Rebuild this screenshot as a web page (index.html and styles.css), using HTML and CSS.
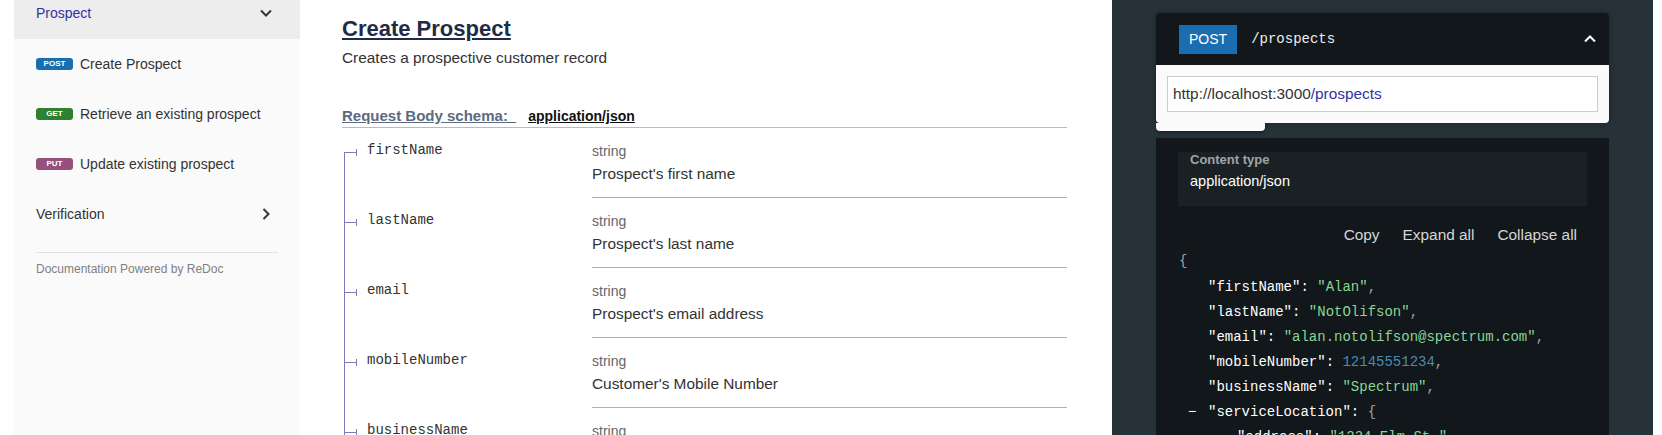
FILE: index.html
```html
<!DOCTYPE html>
<html lang="en">
<head>
<meta charset="utf-8">
<title>Create Prospect</title>
<link rel="stylesheet" href="styles.css">
</head>
<body>
<div class="gutter"></div>
<nav class="sidebar">
  <div class="menu-item active">
    <span class="menu-label">Prospect</span>
    <svg class="chev" width="12" height="8" viewBox="0 0 12 8"><path d="M1 1.5 L6 6.5 L11 1.5" fill="none" stroke="#333" stroke-width="2"/></svg>
  </div>
  <div class="menu-item"><span class="badge post">post</span><span class="menu-label">Create Prospect</span></div>
  <div class="menu-item"><span class="badge get">get</span><span class="menu-label">Retrieve an existing prospect</span></div>
  <div class="menu-item"><span class="badge put">put</span><span class="menu-label">Update existing prospect</span></div>
  <div class="menu-item">
    <span class="menu-label">Verification</span>
    <svg class="chev chev-right" width="8" height="12" viewBox="0 0 8 12"><path d="M1.5 1 L6.5 6 L1.5 11" fill="none" stroke="#333" stroke-width="2"/></svg>
  </div>
  <div class="sep"></div>
  <div class="powered">Documentation Powered by ReDoc</div>
</nav>

<main class="middle">
  <h2 class="title">Create Prospect</h2>
  <p class="desc">Creates a prospective customer record</p>
  <h5 class="schema-head"><span class="schema-label">Request Body schema:&nbsp;&nbsp;</span><span class="schema-type">application/json</span></h5>
  <div class="props">
    <div class="prop first">
      <div class="prop-name"><span class="bullet"></span>firstName</div>
      <div class="prop-details"><div class="type">string</div><div class="pdesc">Prospect's first name</div></div>
    </div>
    <div class="prop">
      <div class="prop-name"><span class="bullet"></span>lastName</div>
      <div class="prop-details"><div class="type">string</div><div class="pdesc">Prospect's last name</div></div>
    </div>
    <div class="prop">
      <div class="prop-name"><span class="bullet"></span>email</div>
      <div class="prop-details"><div class="type">string</div><div class="pdesc">Prospect's email address</div></div>
    </div>
    <div class="prop">
      <div class="prop-name"><span class="bullet"></span>mobileNumber</div>
      <div class="prop-details"><div class="type">string</div><div class="pdesc">Customer's Mobile Number</div></div>
    </div>
    <div class="prop">
      <div class="prop-name"><span class="bullet"></span>businessName</div>
      <div class="prop-details"><div class="type">string</div><div class="pdesc">Prospect's business name</div></div>
    </div>
  </div>
</main>

<aside class="right">
  <div class="endpoint">
    <div class="ep-head">
      <span class="ep-badge">POST</span>
      <span class="ep-path">/prospects</span>
      <svg class="chev-up" width="12" height="8" viewBox="0 0 12 8"><path d="M1 6.5 L6 1.5 L11 6.5" fill="none" stroke="#fff" stroke-width="2"/></svg>
    </div>
    <div class="ep-drop">
      <div class="ep-url">http://localhost:3000<span>/prospects</span></div>
    </div>
  </div>
  <div class="tab"></div>
  <div class="samples">
    <div class="ctype">
      <div class="ctype-label">Content type</div>
      <div class="ctype-val">application/json</div>
    </div>
    <div class="controls"><span>Copy</span><span>Expand all</span><span>Collapse all</span></div>
    <div class="json">
      <div class="p">{</div>
      <ul class="jobj">
        <li><span class="k">"firstName"</span>: <span class="s">"Alan"</span><span class="p">,</span></li>
        <li><span class="k">"lastName"</span>: <span class="s">"NotOlifson"</span><span class="p">,</span></li>
        <li><span class="k">"email"</span>: <span class="s">"alan.notolifson@spectrum.com"</span><span class="p">,</span></li>
        <li><span class="k">"mobileNumber"</span>: <span class="n">12145551234</span><span class="p">,</span></li>
        <li><span class="k">"businessName"</span>: <span class="s">"Spectrum"</span><span class="p">,</span></li>
        <li><span class="collapser">−</span><span class="k">"serviceLocation"</span>: <span class="p">{</span>
          <ul class="jobj">
            <li><span class="k">"address"</span>: <span class="s">"1234 Elm St."</span><span class="p">,</span></li>
          </ul>
        </li>
      </ul>
    </div>
  </div>
</aside>
<div class="scroll"></div>
</body>
</html>
```
FILE: styles.css
```css
* { box-sizing: border-box; }
html, body { margin: 0; }
body {
  display: flex;
  height: 435px;
  overflow: hidden;
  font-family: "Liberation Sans", Arial, sans-serif;
  font-size: 14px;
  color: #333;
  background: #fff;
}
.gutter { width: 14px; flex: none; }
.scroll { width: 9px; flex: none; background: #fff; }

/* sidebar */
.sidebar { width: 286px; flex: none; background: #fafafa; }
.menu-item {
  display: flex;
  align-items: center;
  height: 50px;
  padding: 0 28px 0 22px;
  line-height: 20px;
}
.menu-item .chev { margin-left: auto; }
.menu-item .chev-right { margin-right: 2px; }
.menu-item.active {
  height: 39px;
  align-items: flex-start;
  padding-top: 3px;
  background: #ededed;
  color: #32329f;
}
.menu-item.active .chev { margin-top: 6px; }
.badge {
  width: 37px;
  height: 12px;
  line-height: 12px;
  border-radius: 3px;
  margin-right: 7px;
  color: #fff;
  font-size: 8px;
  font-weight: bold;
  text-transform: uppercase;
  text-align: center;
  flex: none;
}
.badge.post { background: #186faf; }
.badge.get { background: #2f8132; }
.badge.put { background: #95507c; }
.sep { height: 1px; background: #e1e1e1; margin: 13px 22px 0; }
.powered { margin: 9px 22px 0; font-size: 12px; line-height: 14px; color: #808080; }

/* middle */
.middle { width: 812px; flex: none; padding: 16px 45px 0 42px; overflow: hidden; }
.title {
  margin: 0;
  font-size: 22px;
  line-height: 26px;
  font-weight: bold;
  color: #1f2b47;
  text-decoration: underline;
}
.desc { margin: 6px 0 0; line-height: 20px; font-size: 15.4px; }
.schema-head {
  margin: 38px 0 0;
  padding-bottom: 1px;
  border-bottom: 1px solid #b5bcc6;
  line-height: 20px;
  font-size: 14px;
  font-weight: bold;
}
.schema-label { font-size: 15px; color: #5b6a80; text-decoration: underline; }
.schema-type { margin-left: 12px; color: #111; text-decoration: underline; }
.props { padding-left: 2px; }
.prop { display: grid; grid-template-columns: 248px 1fr; }
.prop-name {
  display: flex;
  align-items: flex-start;
  padding-top: 12px;
  font-family: "Liberation Mono", "Courier New", monospace;
  font-size: 14px;
  line-height: 20px;
  color: #333;
  background: linear-gradient(#7c7cbb, #7c7cbb) 0 0 / 1px 100% no-repeat;
}
.first .prop-name { background-position: 0 24px; }
.bullet {
  flex: none;
  width: 12px;
  height: 7px;
  margin: 9px 10px 0 1px;
  border-right: 1px solid #7c7cbb;
  background: linear-gradient(#7c7cbb, #7c7cbb) 0 3px / 100% 1px no-repeat;
}
.prop-details { padding: 13px 0 13px; border-bottom: 1px solid #a8b3bd; }
.type { line-height: 20px; color: #666; margin-bottom: 3px; }
.pdesc { line-height: 20px; color: #333; font-size: 15.4px; }

/* right panel */
.right {
  width: 541px;
  flex: none;
  background: #263238;
  padding: 13px 44px 0;
  display: flex;
  flex-direction: column;
}
.endpoint { flex: none; border-radius: 4px; box-shadow: 0 0 5px rgba(0, 0, 0, 0.3); }
.ep-head {
  height: 52px;
  background: #11171a;
  border-radius: 4px 4px 0 0;
  display: flex;
  align-items: center;
  padding: 0 13px 0 23px;
}
.ep-badge {
  background: #1b6db1;
  color: #fff;
  height: 29px;
  line-height: 29px;
  padding: 0 10px;
  font-size: 14px;
}
.ep-path {
  margin-left: 14px;
  font-family: "Liberation Mono", "Courier New", monospace;
  font-size: 14px;
  color: #eee;
}
.chev-up { margin-left: auto; }
.ep-drop { background: #fafafa; padding: 11px; border-radius: 0 0 4px 4px; }
.ep-url {
  height: 36px;
  border: 1px solid #ccc;
  background: #fff;
  padding: 0 5px;
  line-height: 34px;
  font-size: 15.4px;
  color: #333;
}
.ep-url span { color: #32329f; }
.tab {
  flex: none;
  width: 109px;
  height: 8px;
  background: #fafafa;
  border-radius: 0 0 4px 4px;
  box-shadow: 0 2px 3px rgba(0, 0, 0, 0.3);
}
.samples { margin-top: 7px; flex: 1 0 auto; background: #11171a; padding: 22px 22px 0; }
.ctype { background: #1a2125; padding: 0 12px 15px; }
.ctype-label {
  margin-top: -8px;
  line-height: 16px;
  font-size: 13px;
  font-weight: bold;
  color: #a3a3a3;
}
.ctype-val { margin-top: 3px; line-height: 20px; color: #fff; font-size: 14.5px; }
.controls {
  display: flex;
  justify-content: flex-end;
  gap: 3px;
  margin-top: 19px;
  line-height: 20px;
  font-size: 15.4px;
  color: #d5d5d5;
}
.controls span { padding: 0 10px; }
.json {
  margin-top: 4px;
  padding-left: 1px;
  font-family: "Liberation Mono", "Courier New", monospace;
  font-size: 14px;
  line-height: 25px;
  color: #fff;
  white-space: nowrap;
}
.json ul { list-style: none; margin: 0; padding-left: 29px; }
.json > ul { margin-top: 1px; }
.json .p { color: rgba(255, 255, 255, 0.6); }
.json .s { color: #8ad694; }
.json .n { color: #4a8bb3; }
.collapser { display: inline-block; width: 20px; margin-left: -20px; color: #fff; }
```
